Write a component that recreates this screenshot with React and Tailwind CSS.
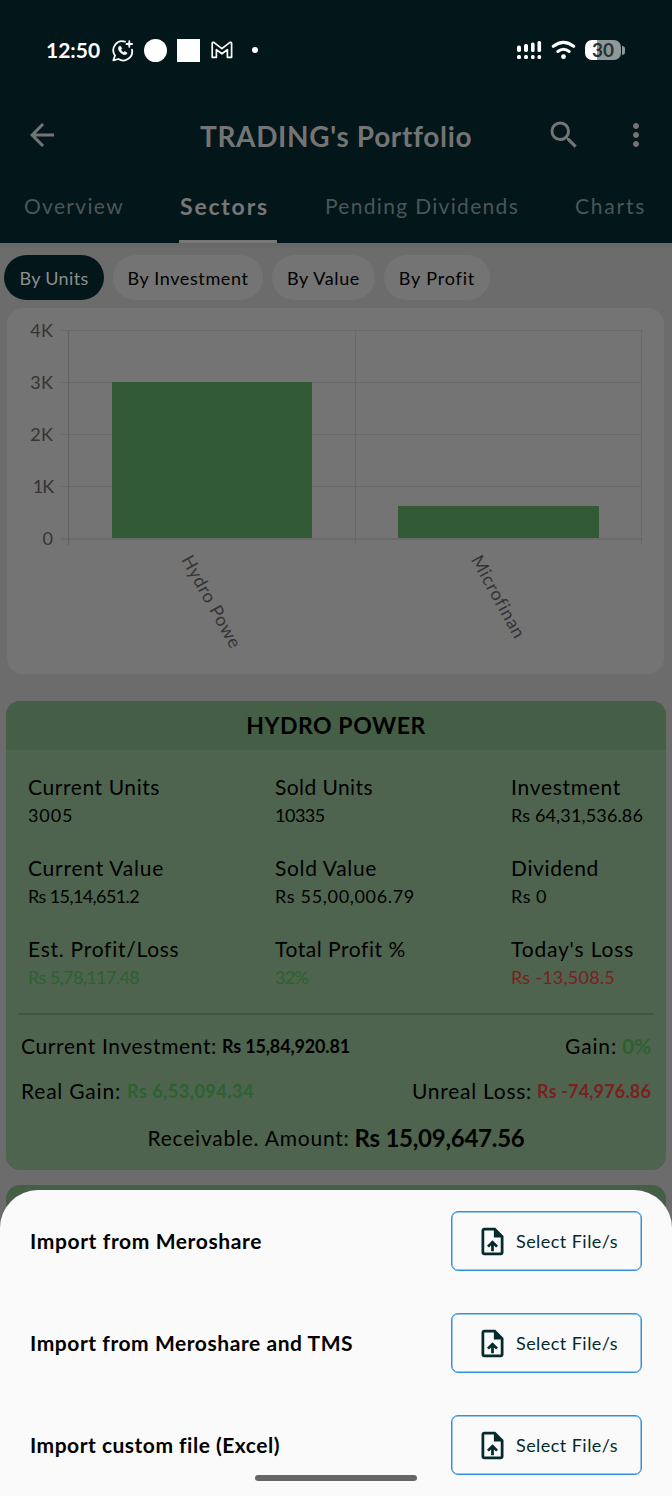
const ArrowBack = () => (
  <svg viewBox="0 0 24 24" className="size-9" fill="currentColor"><path d="M20 11H7.83l5.59-5.59L12 4l-8 8 8 8 1.41-1.41L7.83 13H20v-2z" /></svg>
);
const Search = () => (
  <svg viewBox="0 0 24 24" className="size-9" fill="currentColor"><path d="M15.5 14h-.79l-.28-.27A6.471 6.471 0 0 0 16 9.5 6.5 6.5 0 1 0 9.5 16c1.61 0 3.09-.59 4.23-1.57l.27.28v.79l5 4.99L20.49 19l-4.99-5zm-6 0C7.01 14 5 11.99 5 9.5S7.01 5 9.5 5 14 7.01 14 9.5 11.99 14 9.5 14z" /></svg>
);
const MoreVert = () => (
  <svg viewBox="0 0 24 24" className="size-9" fill="currentColor"><path d="M12 8c1.1 0 2-.9 2-2s-.9-2-2-2-2 .9-2 2 .9 2 2 2zm0 2c-1.1 0-2 .9-2 2s.9 2 2 2 2-.9 2-2-.9-2-2-2zm0 6c-1.1 0-2 .9-2 2s.9 2 2 2 2-.9 2-2-.9-2-2-2z" /></svg>
);
const UploadFile = () => (
  <svg viewBox="0 0 24 24" className="size-[33px] shrink-0" fill="currentColor"><path d="M14 2H6c-1.1 0-1.99.9-1.99 2L4 20c0 1.1.89 2 1.99 2H18c1.1 0 2-.9 2-2V8l-6-6zm4 18H6V4h7v5h5v11zM8 15.01l1.41 1.41L11 14.84V19h2v-4.16l1.59 1.59L16 15.01 12.01 11 8 15.01z" /></svg>
);

const StatusBar = () => (
  <div className="flex h-[100px] items-center pl-[46px] text-white">
    <span className="w-[66px] text-[21px] leading-6 font-bold">12:50</span>
    <svg className="mt-px h-[22px] w-[22px]" viewBox="0 0 22 22" fill="none" stroke="currentColor" strokeWidth="1.8" strokeLinecap="round" strokeLinejoin="round">
      <path d="M13 1.700A9 9 0 0 0 3 15.500L1.400 20.300L6.300 19A9 9 0 0 0 20 9.600" />
      <path d="M17.300 1.200v5.600M14.500 4h5.600" />
      <path d="M7.200 6.400C5.800 7.800 6.400 10.400 8.600 12.500C10.800 14.600 13.400 15.200 14.700 13.800L15 12.900L12.800 11.600L11.600 12.500C10.300 12 9.300 11 8.900 9.700L9.800 8.600L8.400 6.300Z" fill="currentColor" strokeWidth="0.700" />
    </svg>
    <div className="ml-[10px] size-[23px] rounded-full bg-white" />
    <div className="ml-[10px] size-[23px] bg-white" />
    <svg className="ml-[11px] h-[18px] w-[22px]" viewBox="0 0 22 18" fill="none" stroke="currentColor" strokeWidth="1.7" strokeLinejoin="round">
      <path d="M1.200 16.300V2.600Q1.200 1 2.800 1.400L10.900 7.600L19 1.400Q20.600 1 20.600 2.600V16.300H16.400V8.600L10.900 12.800L5.400 8.600V16.300Z" />
    </svg>
    <div className="ml-[19px] size-[6px] rounded-full bg-white" />
    <svg className="ml-[258px] h-5 w-[26px]" viewBox="0 0 26 20" fill="currentColor">
      <rect x="1" y="5.500" width="4" height="6.500" rx="1.800" /><rect x="8" y="4" width="4" height="8" rx="1.800" /><rect x="15" y="2.500" width="3.600" height="9.500" rx="1.600" /><rect x="21.500" y="1" width="3.600" height="11" rx="1.600" />
      <rect x="1" y="15" width="4" height="4" rx="1.500" /><rect x="8" y="15" width="4" height="4" rx="1.500" /><rect x="15" y="15" width="3.600" height="4" rx="1.500" /><rect x="21.500" y="15" width="3.600" height="4" rx="1.500" />
    </svg>
    <svg className="ml-[9px] h-5 w-[25px]" viewBox="0 0 25 20" fill="none" stroke="currentColor" strokeWidth="3" strokeLinecap="round">
      <path d="M2.300 6.300Q12.500-1.500 22.700 6.300" /><path d="M6.800 11.500Q12.500 7 18.200 11.500" /><circle cx="12.500" cy="16.700" r="2.400" fill="currentColor" stroke="none" />
    </svg>
    <div className="ml-[9px] flex h-5 w-9 items-center justify-center rounded-[7px] bg-[linear-gradient(90deg,#fff_12px,#8f9899_12px)] text-[19px] leading-5 font-bold text-[#263335]">30</div>
    <div className="ml-[1px] h-[9px] w-[3px] rounded-r bg-[#8f9899]" />
  </div>
);

const Pill = ({ children, className }) => (
  <div className={`flex h-[45px] items-center justify-center rounded-full text-[18px] leading-6 ${className}`}>{children}</div>
);

const BarChart = () => (
  <svg viewBox="0 0 657 366" className="h-[366px] w-[657px]">
    <g stroke="#696969" strokeWidth="1">
      <path d="M54 22.500H635M54 74.500H635M54 126.500H635M54 178.500H635" />
      <path d="M348.500 22V237M634.500 22V237" />
    </g>
    <path d="M54 231H635M61.500 22V237" stroke="#636363" strokeWidth="1.200" />
    <rect x="105" y="74" width="200" height="156" fill="#335a37" />
    <rect x="391" y="198" width="201" height="32" fill="#335a37" />
    <g fill="#343434" className="text-[18px] tracking-[0.5px]">
      <text x="46.500" y="28.500" textAnchor="end">4K</text>
      <text x="46.500" y="80.500" textAnchor="end">3K</text>
      <text x="46.500" y="133" textAnchor="end">2K</text>
      <text x="46.500" y="185" textAnchor="end" className="tracking-[-0.800px]">1K</text>
      <text x="46.500" y="237" textAnchor="end">0</text>
      <text transform="translate(174 251.500) rotate(61)" className="tracking-[0.6px]">Hydro Powe</text>
      <text transform="translate(463.500 251.500) rotate(61)" className="tracking-[0.7px]">Microfinan</text>
    </g>
  </svg>
);

const GREEN = 'text-[#2b6230]';
const RED = 'text-[#7b1f21]';
const stats = [
  ['Current Units', 'tracking-[0.58px]', '3005', 'tracking-[0.9px]', ''],
  ['Sold Units', 'tracking-[0.42px]', '10335', 'tracking-[-0.5px]', ''],
  ['Investment', 'tracking-[0.71px]', 'Rs 64,31,536.86', 'tracking-[0.14px]', ''],
  ['Current Value', 'tracking-[0.76px]', 'Rs 15,14,651.2', 'tracking-[-0.6px]', ''],
  ['Sold Value', 'tracking-[0.66px]', 'Rs 55,00,006.79', 'tracking-[0.67px]', ''],
  ['Dividend', 'tracking-[0.62px]', 'Rs 0', 'tracking-[0.5px]', ''],
  ['Est. Profit/Loss', 'tracking-[0.73px]', 'Rs 5,78,117.48', 'tracking-[-0.6px]', GREEN],
  ['Total Profit %', 'tracking-[0.54px]', '32%', 'tracking-[-0.77px]', GREEN],
  ["Today's Loss", 'tracking-[0.82px]', 'Rs -13,508.5', 'tracking-[0.23px]', RED],
];

const SectorCard = () => (
  <section className="mx-[6px] mt-[27px] h-[469px] overflow-hidden rounded-[14px] bg-[#4f644f] text-black">
    <h2 className="flex h-[49px] items-center justify-center bg-[#455f47] text-[23px] font-bold tracking-[0.55px]">HYDRO POWER</h2>
    <div className="grid grid-cols-[247px_236px_auto] gap-y-[25px] pt-[23px] pl-[22px]">
      {stats.map(([label, lt, value, vt, color]) => (
        <div key={label} className="whitespace-nowrap">
          <div className={`h-7 text-[21px] leading-7 ${lt}`}>{label}</div>
          <div className={`h-7 text-[18px] leading-7 ${vt} ${color}`}>{value}</div>
        </div>
      ))}
    </div>
    <div className="mx-3 mt-[22px] h-[2px] bg-[#435444]" />
    <div className="flex h-[45px] items-center justify-between pt-[17px] pr-[15px] pl-[15px] whitespace-nowrap">
      <div className="flex items-center gap-[5px]">
        <span className="text-[21px] tracking-[0.62px]">Current Investment:</span>
        <span className="pt-px text-[18px] font-bold tracking-[-0.15px]">Rs 15,84,920.81</span>
      </div>
      <div className="flex items-center gap-[5px] text-[21px]">
        <span className="tracking-[0.85px]">Gain:</span>
        <span className={`font-bold tracking-[-0.2px] ${GREEN}`}>0%</span>
      </div>
    </div>
    <div className="flex h-[45px] items-center justify-between pt-[17px] pr-[15px] pl-[15px] whitespace-nowrap">
      <div className="flex items-center gap-[6px]">
        <span className="text-[21px] tracking-[0.79px]">Real Gain:</span>
        <span className={`pt-px text-[18px] font-bold tracking-[0.5px] ${GREEN}`}>Rs 6,53,094.34</span>
      </div>
      <div className="flex items-center gap-[5px]">
        <span className="text-[21px] tracking-[0.73px]">Unreal Loss:</span>
        <span className={`pt-px text-[18px] font-bold tracking-[0.15px] ${RED}`}>Rs -74,976.86</span>
      </div>
    </div>
    <div className="flex items-center justify-center gap-[5px] pt-[17px] leading-8 whitespace-nowrap">
      <span className="text-[21px] tracking-[0.77px]">Receivable. Amount:</span>
      <span className="text-[24px] font-bold tracking-[-0.26px]">Rs 15,09,647.56</span>
    </div>
  </section>
);

const imports = [
  ['Import from Meroshare', 'tracking-[0.62px]'],
  ['Import from Meroshare and TMS', 'tracking-[0.56px]'],
  ['Import custom file (Excel)', 'tracking-[0.5px]'],
];

export default function App() {
  return (
    <div className="relative h-[1496px] w-[672px] overflow-hidden bg-[#6d6c6d] font-['Lato',sans-serif]">
      <header className="h-[243px] bg-[#031619]">
        <StatusBar />
        <div className="flex h-[70px] items-center pl-6 text-[#747474]">
          <ArrowBack />
          <h1 className="ml-[140px] w-[346px] pt-[2px] text-[28px] leading-9 font-bold tracking-[0.64px] whitespace-nowrap">TRADING's Portfolio</h1>
          <Search />
          <div className="ml-[36px]"><MoreVert /></div>
        </div>
        <nav className="flex h-[73px] pt-[22px] text-[21px] leading-7 whitespace-nowrap text-[#4b5658]">
          <div className="w-[179px] pl-6 tracking-[1.32px]">Overview</div>
          <div className="h-[51px] w-[98px] border-b-[3px] border-[#777] pl-px text-[23px] font-bold tracking-[1.8px] text-[#777]">Sectors</div>
          <div className="ml-[48px] w-[250px] tracking-[1.31px]">Pending Dividends</div>
          <div className="tracking-[1.8px]">Charts</div>
        </nav>
      </header>
      <div className="flex h-[65px] gap-[9px] bg-linear-to-b from-[#666] to-[#6d6c6d] to-10% pt-3 pl-1 text-black">
        <Pill className="w-[100px] bg-[#031619] tracking-[0.35px] text-[#8b8f8f]">By Units</Pill>
        <Pill className="w-[150px] bg-[#747474] tracking-[0.61px]">By Investment</Pill>
        <Pill className="w-[103px] bg-[#747474] tracking-[0.65px]">By Value</Pill>
        <Pill className="w-[106px] bg-[#747474] tracking-[0.84px]">By Profit</Pill>
      </div>
      <div className="ml-[7px] h-[366px] w-[657px] rounded-[16px] bg-[#747474]">
        <BarChart />
      </div>
      <SectorCard />
      <div className="mx-[6px] mt-[15px] h-[100px] rounded-t-[14px] bg-[#455f47]" />

      <div className="absolute inset-x-0 bottom-0 flex h-[306px] flex-col gap-[42px] rounded-t-[38px] bg-[#fafafa] pt-[21px] pr-[29px] pl-[30px]">
        {imports.map(([label, t]) => (
          <div key={label} className="flex h-[60px] items-center justify-between pr-px">
            <span className={`text-[21px] leading-7 font-bold text-black ${t}`}>{label}</span>
            <button className="flex h-[60px] w-[191px] items-center rounded-[7px] border border-[#3490dc] pl-[23.5px] text-[#042a2e] shadow-[inset_0_0_0_0.5px_#3490dc]">
              <UploadFile />
              <span className="ml-[7.5px] text-[18px] leading-6 tracking-[0.45px] whitespace-nowrap">Select File/s</span>
            </button>
          </div>
        ))}
      </div>
      <div className="absolute bottom-[15px] left-[255px] h-[6px] w-[162px] rounded-full bg-[#666]" />
    </div>
  );
}
